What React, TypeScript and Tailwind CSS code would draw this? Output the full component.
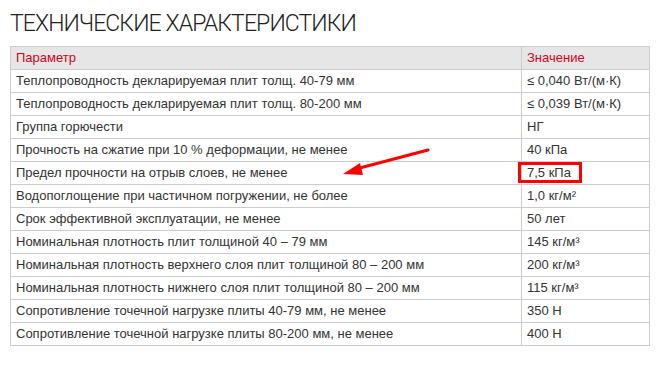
import React from 'react';

const rows: [string, string][] = [
  ['Теплопроводность декларируемая плит толщ. 40-79 мм', '≤ 0,040 Вт/(м·К)'],
  ['Теплопроводность декларируемая плит толщ. 80-200 мм', '≤ 0,039 Вт/(м·К)'],
  ['Группа горючести', 'НГ'],
  ['Прочность на сжатие при 10 % деформации, не менее', '40 кПа'],
  ['Предел прочности на отрыв слоев, не менее', '7,5 кПа'],
  ['Водопоглощение при частичном погружении, не более', '1,0 кг/м²'],
  ['Срок эффективной эксплуатации, не менее', '50 лет'],
  ['Номинальная плотность плит толщиной 40 – 79 мм', '145 кг/м³'],
  ['Номинальная плотность верхнего слоя плит толщиной 80 – 200 мм', '200 кг/м³'],
  ['Номинальная плотность нижнего слоя плит толщиной 80 – 200 мм', '115 кг/м³'],
  ['Сопротивление точечной нагрузке плиты 40-79 мм, не менее', '350 Н'],
  ['Сопротивление точечной нагрузке плиты 80-200 мм, не менее', '400 Н'],
];

const App: React.FC = () => {
  return (
    <div className="w-[669px] h-[365px] bg-white relative">
      <h2
        className="pl-[10px] pt-[10px] text-[23px] leading-[28px] font-light text-[#222] tracking-[-0.9px]"
        style={{ fontFamily: 'Roboto, sans-serif' }}
      >
        ТЕХНИЧЕСКИЕ ХАРАКТЕРИСТИКИ
      </h2>

      <table
        className="ml-[10px] mt-[8px] w-[640px] border-collapse text-[13px] text-[#333]"
        style={{ fontFamily: '"Liberation Sans", Arial, sans-serif' }}
      >
        <thead>
          <tr className="bg-[#e6e6e6]">
            <th className="h-[23px] w-[511px] border border-[#ccc] px-[5px] text-left font-normal text-[#d0021b]">
              Параметр
            </th>
            <th className="h-[23px] border border-[#ccc] px-[5px] text-left font-normal text-[#d0021b]">
              Значение
            </th>
          </tr>
        </thead>
        <tbody>
          {rows.map(([name, value]) => (
            <tr key={name}>
              <td className="h-[23px] border border-[#ccc] px-[5px]">{name}</td>
              <td className="h-[23px] border border-[#ccc] px-[5px]">{value}</td>
            </tr>
          ))}
        </tbody>
      </table>

      {/* highlight box */}
      <div className="absolute left-[518px] top-[162px] w-[64px] h-[21px] border-[3px] border-[#f00]" />

      {/* arrow */}
      <svg className="absolute left-0 top-0" width="669" height="365">
        <line x1="428" y1="150" x2="356" y2="169" stroke="#f00" strokeWidth="3" strokeLinecap="round" />
        <polygon points="343,174 360,163 363,175" fill="#f00" />
      </svg>
    </div>
  );
};

export default App;
